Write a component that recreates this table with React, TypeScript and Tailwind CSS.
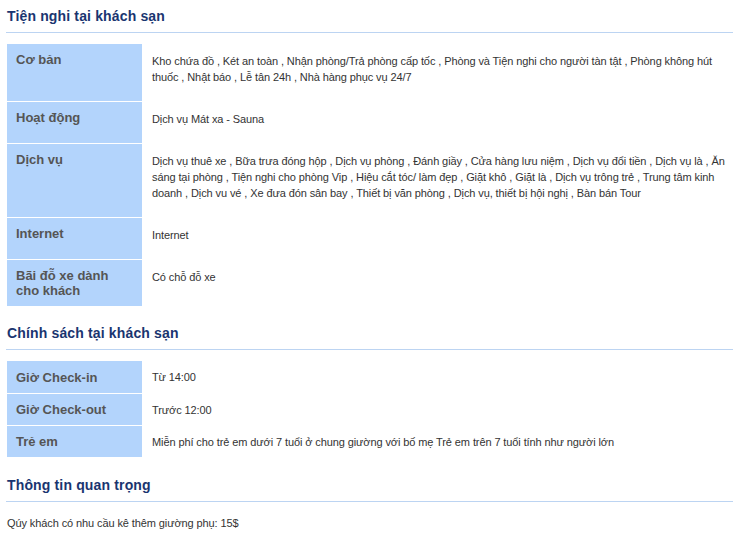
const amenities = [
  {
    label: "Cơ bản",
    value:
      "Kho chứa đồ , Két an toàn , Nhận phòng/Trả phòng cấp tốc , Phòng và Tiện nghi cho người tàn tật , Phòng không hút thuốc , Nhật báo , Lễ tân 24h , Nhà hàng phục vụ 24/7",
  },
  { label: "Hoạt động", value: "Dịch vụ Mát xa - Sauna" },
  {
    label: "Dịch vụ",
    value:
      "Dịch vụ thuê xe , Bữa trưa đóng hộp , Dịch vụ phòng , Đánh giầy , Cửa hàng lưu niệm , Dịch vụ đổi tiền , Dịch vụ là , Ăn sáng tại phòng , Tiện nghi cho phòng Vip , Hiệu cắt tóc/ làm đẹp , Giặt khô , Giặt là , Dịch vụ trông trẻ , Trung tâm kinh doanh , Dịch vu vé , Xe đưa đón sân bay , Thiết bị văn phòng , Dịch vụ, thiết bị hội nghị , Bàn bán Tour",
  },
  { label: "Internet", value: "Internet" },
  { label: "Bãi đỗ xe dành cho khách", value: "Có chỗ đỗ xe" },
];

const policies = [
  { label: "Giờ Check-in", value: "Từ 14:00" },
  { label: "Giờ Check-out", value: "Trước 12:00" },
  {
    label: "Trẻ em",
    value: "Miễn phí cho trẻ em dưới 7 tuổi ở chung giường với bố mẹ Trẻ em trên 7 tuổi tính như người lớn",
  },
];

function Heading({ children }: { children: React.ReactNode }) {
  return (
    <h2 className="border-b border-[#bcd4f2] pl-px pb-[6px] text-[14px] leading-[20px] font-bold tracking-[0.15px] text-[#1a3570]">
      {children}
    </h2>
  );
}

export default function App() {
  return (
    <div className="min-h-[535px] w-[737px] bg-white pl-[6px] pr-[4px] pt-[6px] font-['Liberation_Sans',Arial,sans-serif] text-[11px] tracking-[-0.1px] text-[#333]">
      <Heading>Tiện nghi tại khách sạn</Heading>

      {/* Amenities */}
      <div className="ml-px mt-[11px]">
        {amenities.map((row, i) => (
          <div key={row.label} className={`flex ${i > 0 ? "border-t border-white" : ""}`}>
            <div className="w-[135px] shrink-0 bg-[#b3d4fc] pl-[9px] pr-[10px] pt-[8px] pb-[8px] text-[13px] leading-[15px] font-bold tracking-normal text-[#555]">
              {row.label}
            </div>
            <div className="flex-1 pl-[10px] pr-[6px] pt-[9px] pb-[16px] leading-[16px]">{row.value}</div>
          </div>
        ))}
      </div>

      <div className="mt-[17px]">
        <Heading>Chính sách tại khách sạn</Heading>
      </div>

      {/* Policies */}
      <div className="ml-px mt-[11px]">
        {policies.map((row, i) => (
          <div key={row.label} className={`flex h-[32px] items-stretch ${i > 0 ? "border-t border-white" : ""}`}>
            <div className="flex w-[135px] shrink-0 items-center bg-[#b3d4fc] pl-[9px] text-[13px] leading-[15px] font-bold tracking-normal text-[#555]">
              {row.label}
            </div>
            <div className="flex flex-1 items-center pl-[10px] pr-[6px] leading-[16px]">{row.value}</div>
          </div>
        ))}
      </div>

      <div className="mt-[18px]">
        <Heading>Thông tin quan trọng</Heading>
      </div>
      <p className="mt-[13px] pl-px leading-[16px]">Qúy khách có nhu cầu kê thêm giường phụ: 15$</p>
    </div>
  );
}
